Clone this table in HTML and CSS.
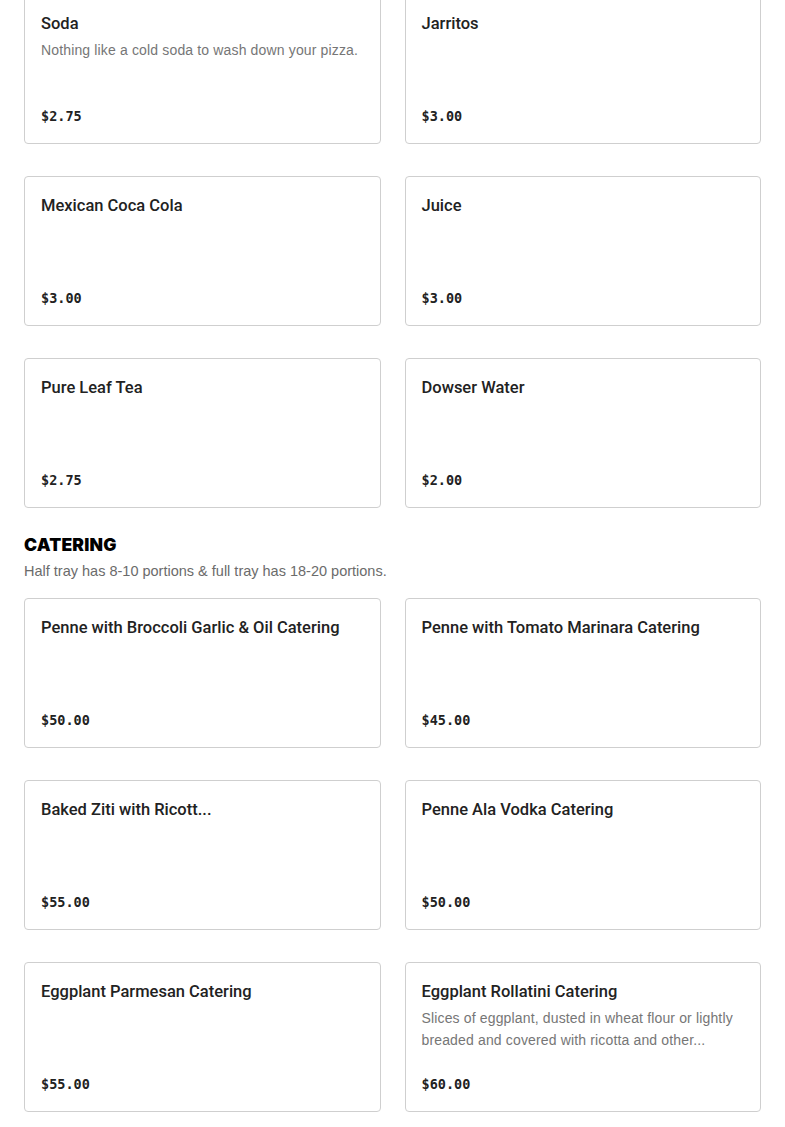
FILE: index.html
```html
<!DOCTYPE html>
<html lang="en">
<head>
<meta charset="utf-8">
<title>Menu</title>
<link rel="stylesheet" href="styles.css">
</head>
<body>
<main class="menu">
  <section class="section">
    <div class="grid">
      <article class="card"><div class="info"><h3 class="title">Soda</h3><p class="desc">Nothing like a cold soda to wash down your pizza.</p></div><div class="price">$2.75</div></article>
      <article class="card"><div class="info"><h3 class="title">Jarritos</h3></div><div class="price">$3.00</div></article>
      <article class="card"><div class="info"><h3 class="title">Mexican Coca Cola</h3></div><div class="price">$3.00</div></article>
      <article class="card"><div class="info"><h3 class="title">Juice</h3></div><div class="price">$3.00</div></article>
      <article class="card"><div class="info"><h3 class="title">Pure Leaf Tea</h3></div><div class="price">$2.75</div></article>
      <article class="card"><div class="info"><h3 class="title">Dowser Water</h3></div><div class="price">$2.00</div></article>
    </div>
  </section>
  <section class="section">
    <h2 class="heading">CATERING</h2>
    <p class="subtitle">Half tray has 8-10 portions &amp; full tray has 18-20 portions.</p>
    <div class="grid">
      <article class="card"><div class="info"><h3 class="title">Penne with Broccoli Garlic &amp; Oil Catering</h3></div><div class="price">$50.00</div></article>
      <article class="card"><div class="info"><h3 class="title">Penne with Tomato Marinara Catering</h3></div><div class="price">$45.00</div></article>
      <article class="card"><div class="info"><h3 class="title">Baked Ziti with Ricott...</h3></div><div class="price">$55.00</div></article>
      <article class="card"><div class="info"><h3 class="title">Penne Ala Vodka Catering</h3></div><div class="price">$50.00</div></article>
      <article class="card"><div class="info"><h3 class="title">Eggplant Parmesan Catering</h3></div><div class="price">$55.00</div></article>
      <article class="card"><div class="info"><h3 class="title">Eggplant Rollatini Catering</h3><p class="desc">Slices of eggplant, dusted in wheat flour or lightly breaded and covered with ricotta and other...</p></div><div class="price">$60.00</div></article>
    </div>
  </section>
</main>
</body>
</html>
```

FILE: styles.css
```css
* { box-sizing: border-box; }
html, body { margin: 0; padding: 0; background: #fff; }
body {
  font-family: "Liberation Sans", Arial, sans-serif;
  color: #191919;
}
.menu {
  padding: 0 24px;
  margin-top: -6px;
}
.section {
  display: flex;
  flex-direction: column;
}
.section + .section {
  margin-top: 25px;
}
.grid {
  display: grid;
  grid-template-columns: 1fr 1fr;
  column-gap: 24px;
  row-gap: 32px;
}
.card {
  height: 150px;
  border: 1px solid #cfcfcf;
  border-radius: 4px;
  padding: 16px 16px 15px;
  display: flex;
  flex-direction: column;
  justify-content: space-between;
  background: #fff;
}
.title {
  margin: 0;
  font-family: "Roboto", "Liberation Sans", sans-serif;
  font-size: 16.5px;
  line-height: 26px;
  font-weight: 500;
  color: #222;
}
.desc {
  margin: 2px 0 0;
  font-size: 14px;
  line-height: 22px;
  color: #767676;
  letter-spacing: 0.15px;
}
.price {
  font-family: "DejaVu Sans Mono", "Liberation Mono", monospace;
  font-weight: bold;
  font-size: 13.5px;
  line-height: 24px;
  color: #222;
}
.heading {
  margin: 0;
  font-family: "Inter", "Liberation Sans", sans-serif;
  font-weight: 900;
  font-size: 17.5px;
  letter-spacing: 0.2px;
  line-height: 24px;
  color: #000;
}
.subtitle {
  margin: 3px 0 16px;
  font-size: 14.5px;
  line-height: 22px;
  color: #6b6b6b;
}
```
